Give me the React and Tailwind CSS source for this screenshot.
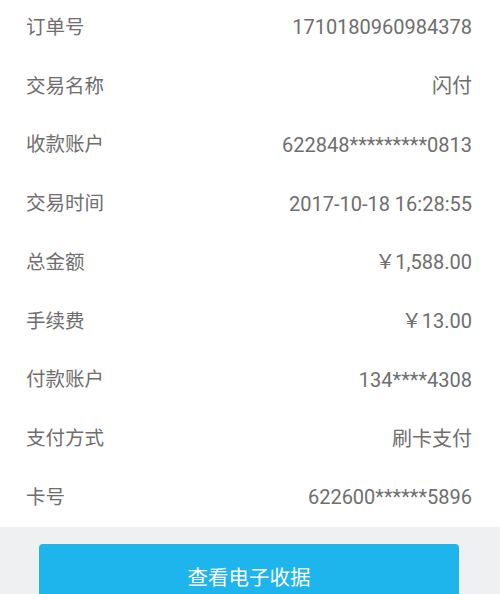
export default function App() {
  const rows = [
    ["订单号", "1710180960984378"],
    ["交易名称", "闪付"],
    ["收款账户", "622848*********0813"],
    ["交易时间", "2017-10-18 16:28:55"],
    ["总金额", "￥1,588.00"],
    ["手续费", "￥13.00"],
    ["付款账户", "134****4308"],
    ["支付方式", "刷卡支付"],
    ["卡号", "622600******5896"],
  ];
  return (
    <div
      className="w-[500px] h-[594px] overflow-hidden bg-[#eef0f2]"
      style={{ fontFamily: 'Roboto, "Noto Sans CJK SC", sans-serif' }}
    >
      <div className="bg-white -mt-[2px]">
        {rows.map(([k, v]) => (
          <div
            key={k}
            className="h-[58.75px] flex items-center justify-between pl-[26px] pr-[28px] text-[#6e6e6e]"
          >
            <span className="text-[19.5px]">{k}</span>
            <span className="text-[20px]">{v}</span>
          </div>
        ))}
      </div>
      <div className="pl-[39px] pt-[17px]">
        <div className="w-[420px] h-[70px] rounded-[4px] bg-[#1eb4ec] flex items-center justify-center text-white text-[20.5px]">
          查看电子收据
        </div>
      </div>
    </div>
  );
}
